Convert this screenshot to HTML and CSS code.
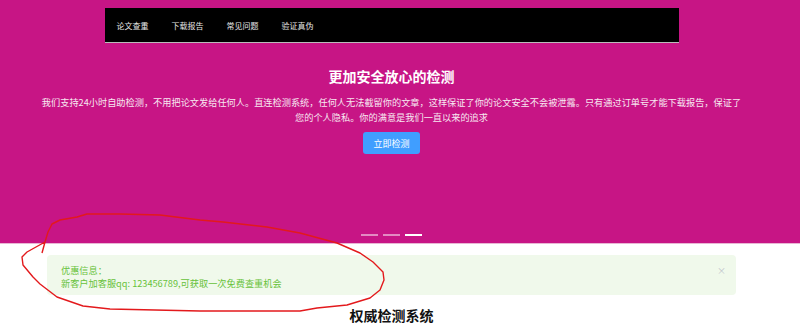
FILE: index.html
```html
<!DOCTYPE html>
<html lang="zh-CN">
<head>
    <meta charset="UTF-8">
    <meta name="viewport" content="width=device-width, initial-scale=1.0">
    <title>论文查重</title>
    <link rel="stylesheet" href="styles.css">
</head>
<body>
    <section class="banner">
        <div class="banner-inner">
            <nav class="nav">
                <a href="#">论文查重</a>
                <a href="#">下载报告</a>
                <a href="#">常见问题</a>
                <a href="#">验证真伪</a>
            </nav>

            <h2 class="banner-title">更加安全放心的检测</h2>
            <p class="banner-text">我们支持24小时自助检测，不用把论文发给任何人。直连检测系统，任何人无法截留你的文章，这样保证了你的论文安全不会被泄露。只有通过订单号才能下载报告，保证了<br>您的个人隐私。你的满意是我们一直以来的追求</p>
            <button class="btn-primary">立即检测</button>

            <div class="indicators">
                <span class="dot"></span>
                <span class="dot"></span>
                <span class="dot active"></span>
            </div>
        </div>
    </section>

    <main class="content">
        <div class="alert">
            <div class="alert-body">
                <p>优惠信息：</p>
                <p>新客户加客服qq: 123456789,可获取一次免费查重机会</p>
            </div>
            <span class="alert-close">×</span>
        </div>

        <h3 class="section-title">权威检测系统</h3>
    </main>

    <svg class="scribble" width="800" height="336" viewBox="0 0 800 336">
        <path d="M42,253 L45,242 L48,232 L52,224 L60,220 L77,217 L87,214 L120,214 L160,215 L200,220 L223,222 L267,227 L300,233 L337,243 L360,253 L373,262 L383,272 L384,280 L380,290 L370,298 L347,305 L317,308 L300,311 L200,311 L110,309 L83,306 L57,297 L40,284 L33,277 L23,265 L22,257 L27,252 L45,242" fill="none" stroke="#e3191c" stroke-width="1.4" stroke-linejoin="round"/>
    </svg>
</body>
</html>
```

FILE: styles.css
```css
*{
    margin: 0px;
    padding: 0px;
    box-sizing: border-box;
}

body{
    font-family: "Noto Sans CJK SC", "Noto Sans", sans-serif;
    background-color: #FFF;
    position: relative;
    width: 800px;
    height: 336px;
    overflow: hidden;
}

.banner{
    background-color: #C71585;
    height: 244px;
    border-bottom: 1px solid #E8B6D4;
}

.banner-inner{
    width: 783px;
    height: 100%;
    display: flex;
    flex-direction: column;
    align-items: center;
}

.nav{
    width: 574px;
    height: 35px;
    margin-top: 8px;
    background-color: #000;
    border-bottom: 1px solid #BBB;
    display: flex;
    align-items: center;
    gap: 23px;
    padding-left: 12px;
}

.nav a{
    color: #E6E6E6;
    font-size: 8px;
    text-decoration: none;
}

.banner-title{
    margin-top: 23px;
    color: #FFF;
    font-size: 14px;
    line-height: 20px;
    font-weight: bold;
}

.banner-text{
    margin-top: 9px;
    width: 760px;
    color: #F7E8F1;
    font-size: 9.2px;
    line-height: 15px;
    text-align: center;
}

.btn-primary{
    margin-top: 7px;
    width: 57px;
    height: 22px;
    border: 0px;
    border-radius: 3px;
    background-color: #409EFF;
    color: #FFF;
    font-family: inherit;
    font-size: 9px;
}

.indicators{
    margin-top: auto;
    margin-bottom: 7px;
    display: flex;
    gap: 5px;
}

.dot{
    width: 17px;
    height: 2px;
    background-color: rgba(255,255,255,0.5);
}

.dot.active{
    background-color: #FFF;
}

.content{
    width: 783px;
    display: flex;
    flex-direction: column;
    align-items: center;
}

.alert{
    margin-top: 11px;
    width: 689px;
    height: 40px;
    background-color: #F0F9EB;
    border-radius: 4px;
    display: flex;
    justify-content: space-between;
    padding: 9px 10px 0px 14px;
}

.alert-body{
    color: #67C23A;
    font-size: 9.2px;
    line-height: 13px;
}

.alert-close{
    color: #C0C4CC;
    font-size: 9px;
    line-height: 13px;
}

.section-title{
    margin-top: 10px;
    font-size: 14px;
    line-height: 20px;
    font-weight: bold;
    color: #111;
}

.scribble{
    position: absolute;
    top: 0px;
    left: 0px;
    pointer-events: none;
}
```
